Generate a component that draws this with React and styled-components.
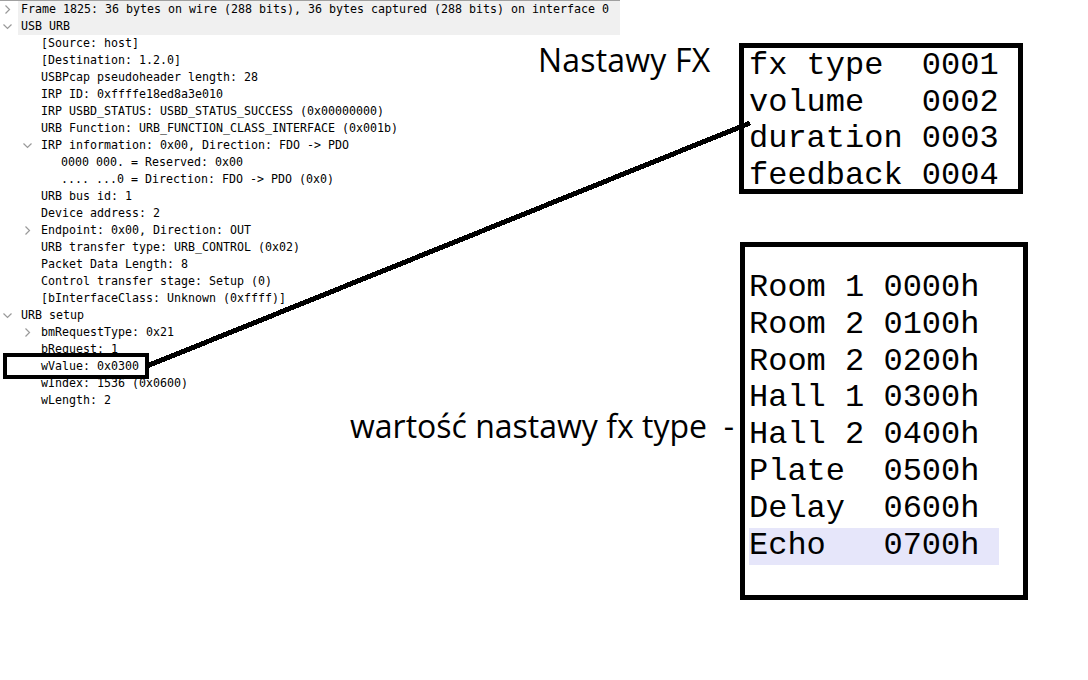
import React from 'react';
import styled, { createGlobalStyle } from 'styled-components';

const GlobalStyle = createGlobalStyle`
  html, body {
    margin: 0;
    padding: 0;
    background: #ffffff;
  }
`;

const treeRows = [
  { level: 0, toggle: 'closed', selected: true, text: 'Frame 1825: 36 bytes on wire (288 bits), 36 bytes captured (288 bits) on interface 0' },
  { level: 0, toggle: 'open', selected: true, text: 'USB URB' },
  { level: 1, text: '[Source: host]' },
  { level: 1, text: '[Destination: 1.2.0]' },
  { level: 1, text: 'USBPcap pseudoheader length: 28' },
  { level: 1, text: 'IRP ID: 0xffffe18ed8a3e010' },
  { level: 1, text: 'IRP USBD_STATUS: USBD_STATUS_SUCCESS (0x00000000)' },
  { level: 1, text: 'URB Function: URB_FUNCTION_CLASS_INTERFACE (0x001b)' },
  { level: 1, toggle: 'open', text: 'IRP information: 0x00, Direction: FDO -> PDO' },
  { level: 2, text: '0000 000. = Reserved: 0x00' },
  { level: 2, text: '.... ...0 = Direction: FDO -> PDO (0x0)' },
  { level: 1, text: 'URB bus id: 1' },
  { level: 1, text: 'Device address: 2' },
  { level: 1, toggle: 'closed', text: 'Endpoint: 0x00, Direction: OUT' },
  { level: 1, text: 'URB transfer type: URB_CONTROL (0x02)' },
  { level: 1, text: 'Packet Data Length: 8' },
  { level: 1, text: 'Control transfer stage: Setup (0)' },
  { level: 1, text: '[bInterfaceClass: Unknown (0xffff)]' },
  { level: 0, toggle: 'open', text: 'URB setup' },
  { level: 1, toggle: 'closed', text: 'bmRequestType: 0x21' },
  { level: 1, text: 'bRequest: 1' },
  { level: 1, framed: true, text: 'wValue: 0x0300' },
  { level: 1, text: 'wIndex: 1536 (0x0600)' },
  { level: 1, text: 'wLength: 2' },
];

const fxParams = [
  'fx type  0001',
  'volume   0002',
  'duration 0003',
  'feedback 0004',
];

const fxTypes = [
  { text: 'Room 1 0000h' },
  { text: 'Room 2 0100h' },
  { text: 'Room 2 0200h' },
  { text: 'Hall 1 0300h' },
  { text: 'Hall 2 0400h' },
  { text: 'Plate  0500h' },
  { text: 'Delay  0600h' },
  { text: 'Echo   0700h', marked: true },
];

// page is one grid cell: the packet tree and the notes drawn over it share it
const Page = styled.div`
  display: grid;
  grid-template-areas: "stack";
  width: 1088px;
  height: 680px;
  overflow: hidden;
  background: #ffffff;

  > * {
    grid-area: stack;
  }
`;

const Tree = styled.div`
  align-self: start;
  width: 620px;
  border-top: 1px solid #a0a0a0;
  font-family: "DejaVu Sans Mono", "Liberation Mono", monospace;
  font-size: 11.63px;
  color: #000000;
`;

const Row = styled.div`
  display: flex;
  height: 17px;
  line-height: 17px;
  padding-left: ${p => p.$level * 20}px;
  position: relative;

  ${p => p.$framed && `
    &::after {
      content: '';
      position: absolute;
      left: 3px;
      top: -5px;
      width: 146px;
      height: 26px;
      box-sizing: border-box;
      border: 4px solid #000000;
    }
  `}
`;

const Toggle = styled.span`
  flex: none;
  width: 18px;
  display: flex;
  align-items: center;
  padding-left: 3px;
  box-sizing: border-box;
`;

const Label = styled.span`
  flex: 1;
  padding-left: 3px;
  white-space: pre;
  background: ${p => (p.$selected ? '#f0f0f0' : 'transparent')};
`;

const Notes = styled.div`
  display: flex;
  flex-direction: column;
  padding-top: 43px;
  pointer-events: none;
`;

const NoteRow = styled.div`
  display: flex;
  align-items: flex-start;
  padding-left: ${p => p.$left}px;
  margin-top: ${p => p.$gap || 0}px;
`;

const Caption = styled.div`
  font-family: "Open Sans", "Noto Sans", sans-serif;
  font-size: 32px;
  color: #000000;
  white-space: pre;
  width: ${p => p.$width}px;
  margin-top: ${p => p.$offset || 0}px;
  letter-spacing: ${p => p.$tracking || 0}px;
`;

const Box = styled.div`
  box-sizing: border-box;
  width: ${p => p.$width}px;
  height: ${p => p.$height}px;
  border: 5px solid #000000;
  padding: ${p => p.$pad};
  font-family: "Liberation Mono", "Courier New", monospace;
  font-size: 32px;
  color: #000000;
  background: #ffffff;
`;

const ParamLine = styled.div`
  white-space: pre;
  line-height: 36.7px;
`;

const TypeRow = styled.div`
  white-space: pre;
  width: 250px;
  line-height: 36.9px;
  background: ${p => (p.$marked ? '#e6e6fa' : 'transparent')};
`;

const Connector = styled.svg`
  width: 1088px;
  height: 680px;
  pointer-events: none;
`;

function Chevron({ open }) {
  return (
    <svg width="9" height="9" viewBox="0 0 9 9">
      <path
        d={open ? 'M0.5 2.5 L4.5 6.5 L8.5 2.5' : 'M2.5 0.5 L6.5 4.5 L2.5 8.5'}
        fill="none"
        stroke="#9a9a9a"
        strokeWidth="1.2"
      />
    </svg>
  );
}

export default function App() {
  return (
    <Page>
      <GlobalStyle />
      <Tree>
        {treeRows.map((row, i) => (
          <Row key={i} $level={row.level} $framed={row.framed}>
            <Toggle>{row.toggle && <Chevron open={row.toggle === 'open'} />}</Toggle>
            <Label $selected={row.selected}>{row.text}</Label>
          </Row>
        ))}
      </Tree>

      <Notes>
        <NoteRow $left={538}>
          <Caption $width={201} $offset={-5} $tracking={0.2}>Nastawy FX</Caption>
          <Box $width={284} $height={151} $pad="0 0 0 5px">
            {fxParams.map(line => (
              <ParamLine key={line}>{line}</ParamLine>
            ))}
          </Box>
        </NoteRow>
        <NoteRow $left={350} $gap={48}>
          <Caption $width={390} $offset={162}>wartość nastawy fx type  -</Caption>
          <Box $width={288} $height={358} $pad="22.7px 0 0 4px">
            {fxTypes.map((t, i) => (
              <TypeRow key={i} $marked={t.marked}>{t.text}</TypeRow>
            ))}
          </Box>
        </NoteRow>
      </Notes>

      <Connector viewBox="0 0 1088 680">
        <line x1="147" y1="366" x2="750" y2="123" stroke="#000000" strokeWidth="5" shapeRendering="crispEdges" />
      </Connector>
    </Page>
  );
}
